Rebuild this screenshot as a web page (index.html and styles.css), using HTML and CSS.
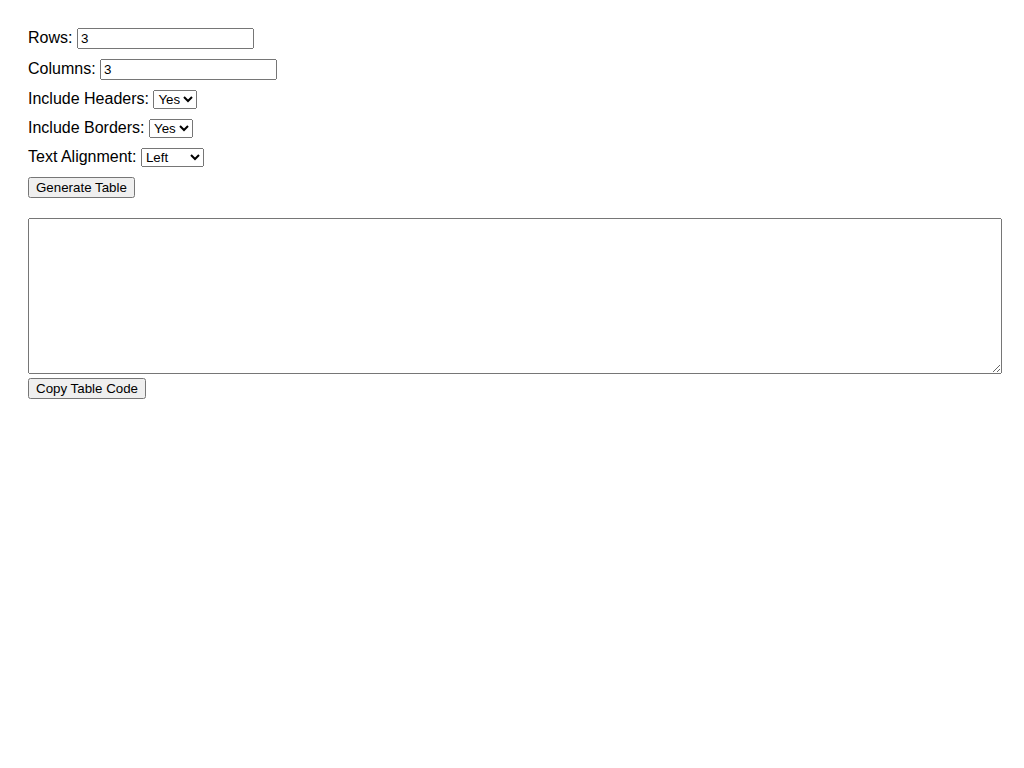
FILE: index.html
```html
<!DOCTYPE html>
<html>
<head>
<meta charset="utf-8">
<title>Table Generator</title>
<link rel="stylesheet" href="styles.css">
</head>
<body>
<div class="form-group"><label for="rows">Rows:</label> <input class="num" type="number" id="rows" value="3"></div>
<div class="form-group"><label for="cols">Columns:</label> <input class="num" type="number" id="cols" value="3"></div>
<div class="form-group"><label for="headers">Include Headers:</label> <select id="headers"><option>Yes</option><option>No</option></select></div>
<div class="form-group"><label for="borders">Include Borders:</label> <select id="borders"><option>Yes</option><option>No</option></select></div>
<div class="form-group"><label for="align">Text Alignment:</label> <select id="align"><option>Left</option><option>Center</option><option>Right</option></select></div>
<div class="form-group"><button type="button">Generate Table</button></div>
<div class="output"><textarea class="code"></textarea>
<button type="button">Copy Table Code</button></div>
</body>
</html>
```
FILE: styles.css
```css
body {
  font-family: "Liberation Sans", Arial, sans-serif;
  padding: 20px;
}
.form-group {
  margin-bottom: 10px;
}
.num {
  box-sizing: border-box;
  width: 177px;
}
.output {
  margin-top: 20px;
}
.code {
  width: 100%;
  height: 150px;
}
```
